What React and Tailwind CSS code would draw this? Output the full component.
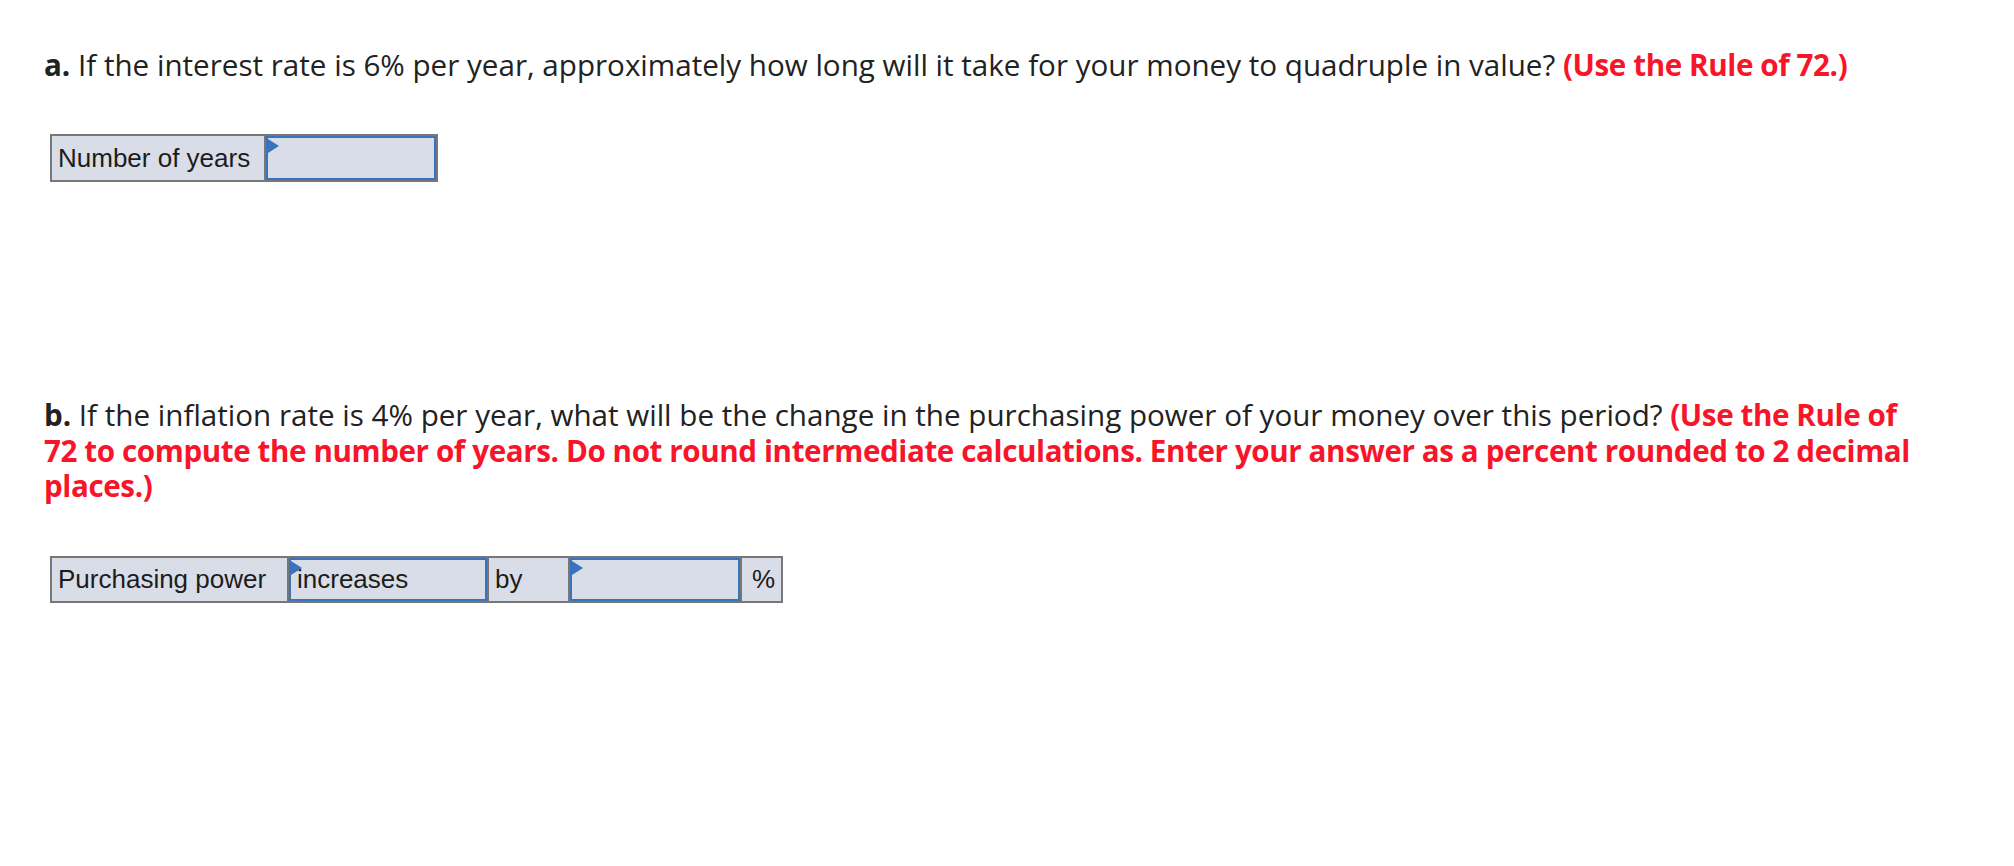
const Marker = () => (
  <span className="absolute top-[1px] left-0 w-0 h-0 border-y-[7px] border-y-transparent border-l-[11px] border-l-[#3a73bd]" />
);

const InputCell = ({ width, children }) => (
  <div className={`relative h-full border-2 border-[#3a73bd] flex items-center pl-[6px] ${width}`}>
    <Marker />
    {children}
  </div>
);

export default function App() {
  return (
    <div className="min-h-screen bg-white pl-[44px] pt-[47px] text-[#222] font-['Open_Sans','Lato',sans-serif]">
      <p className="text-[29.6px] leading-[36px] w-[1890px]">
        <span className="font-bold">a.</span> If the interest rate is 6% per year, approximately how long will it take for your money to quadruple in value?{' '}
        <span className="font-bold text-[#f8152a] tracking-[-0.4px]">(Use the Rule of 72.)</span>
      </p>

      <div className="ml-[6px] mt-[51px] flex h-[48px] w-max border-2 border-[#777] bg-[#d9dde8] font-['Liberation_Sans','Arial',sans-serif] text-[26px] text-[#1c1c1c]">
        <div className="w-[214px] h-full border-r-2 border-[#777] flex items-center pl-[6px]">Number of years</div>
        <InputCell width="w-[170px]" />
      </div>

      <p className="mt-[215px] text-[29.6px] leading-[35.5px] w-[1890px]">
        <span className="font-bold">b.</span> If the inflation rate is 4% per year, what will be the change in the purchasing power of your money over this period?{' '}
        <span className="font-bold text-[#f8152a] tracking-[-0.4px]">
          (Use the Rule of 72 to compute the number of years. Do not round intermediate calculations. Enter your answer as a percent rounded to 2 decimal places.)
        </span>
      </p>

      <div className="ml-[6px] mt-[52px] flex h-[47px] w-max border-2 border-[#777] bg-[#d9dde8] font-['Liberation_Sans','Arial',sans-serif] text-[26px] text-[#1c1c1c]">
        <div className="w-[237px] h-full border-r-2 border-[#777] flex items-center pl-[6px]">Purchasing power</div>
        <InputCell width="w-[198px]">increases</InputCell>
        <div className="w-[83px] h-full border-x-2 border-[#777] flex items-center pl-[6px]">by</div>
        <InputCell width="w-[170px]" />
        <div className="w-[41px] h-full border-l-2 border-[#777] flex items-center pl-[10px]">%</div>
      </div>
    </div>
  );
}
